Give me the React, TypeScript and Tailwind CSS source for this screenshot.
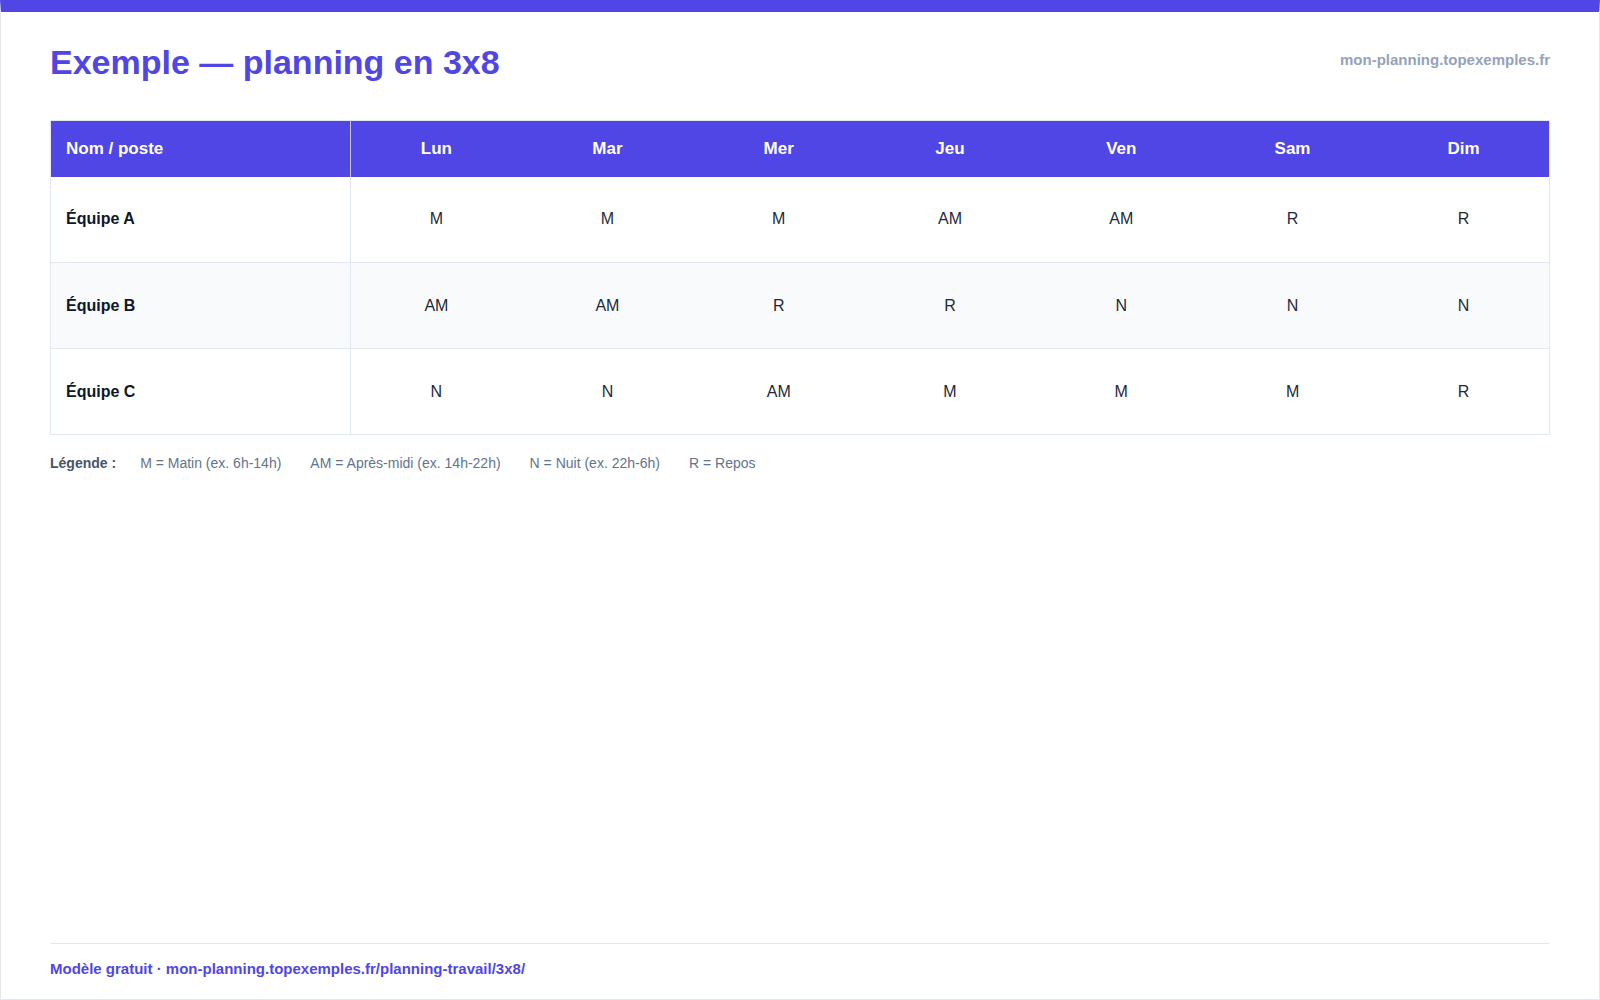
const days = ["Lun", "Mar", "Mer", "Jeu", "Ven", "Sam", "Dim"];

const rows = [
  { name: "Équipe A", shifts: ["M", "M", "M", "AM", "AM", "R", "R"] },
  { name: "Équipe B", shifts: ["AM", "AM", "R", "R", "N", "N", "N"] },
  { name: "Équipe C", shifts: ["N", "N", "AM", "M", "M", "M", "R"] },
];

const legend = [
  "M = Matin (ex. 6h-14h)",
  "AM = Après-midi (ex. 14h-22h)",
  "N = Nuit (ex. 22h-6h)",
  "R = Repos",
];

export default function App() {
  return (
    <div className="w-[1600px] h-[1000px] bg-white flex flex-col border-x border-b border-[#e5e7eb] border-t-[12px] border-t-[#4f46e5] px-[49px] font-['Liberation_Sans',Arial,sans-serif]">
      <header className="flex items-center justify-between pt-[30px]">
        <h1 className="text-[34px] leading-[41px] font-bold text-[#4f46e5]">
          Exemple — planning en 3x8
        </h1>
        <span className="text-[15px] font-bold text-[#94a3b8] mb-[4px]">
          mon-planning.topexemples.fr
        </span>
      </header>

      <table className="mt-[37px] w-full table-fixed border-collapse border border-[#e2e8f0]">
        <colgroup>
          <col className="w-[300px]" />
        </colgroup>
        <thead>
          <tr className="h-[56px] bg-[#4f46e5] text-white text-[17px] font-bold">
            <th className="text-left pl-[15px] border-r border-[#c7c4f5]">Nom / poste</th>
            {days.map((d) => (
              <th key={d} className="text-center">{d}</th>
            ))}
          </tr>
        </thead>
        <tbody>
          {rows.map((row, i) => (
            <tr
              key={row.name}
              className={`h-[86px] border-b border-[#e2e8f0] ${i === 1 ? "bg-[#f8fafc]" : "bg-white"}`}
            >
              <td className="pl-[15px] text-[16px] font-bold text-[#0f172a] border-r border-[#e2e8f0]">
                {row.name}
              </td>
              {row.shifts.map((s, j) => (
                <td key={j} className="text-center text-[16px] text-[#1e293b]">{s}</td>
              ))}
            </tr>
          ))}
        </tbody>
      </table>

      <div className="mt-[18px] flex items-center text-[14px] leading-[20px]">
        <span className="font-bold text-[#475569] mr-[24px]">Légende :</span>
        <div className="flex gap-[29px] text-[#64748b]">
          {legend.map((l) => (
            <span key={l}>{l}</span>
          ))}
        </div>
      </div>

      <footer className="mt-auto border-t border-[#e2e8f0] pt-[15px] pb-[20px]">
        <p className="text-[15px] leading-[20px] font-bold text-[#4f46e5]">
          Modèle gratuit · mon-planning.topexemples.fr/planning-travail/3x8/
        </p>
      </footer>
    </div>
  );
}
